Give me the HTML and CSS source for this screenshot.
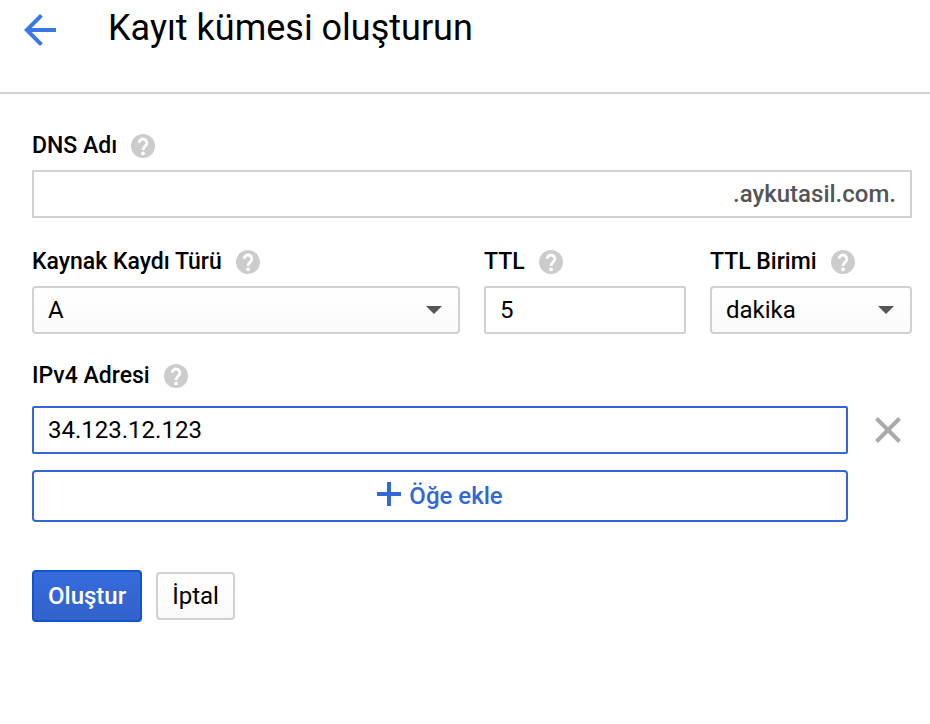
FILE: index.html
```html
<!DOCTYPE html>
<html lang="tr">
<head>
<meta charset="utf-8">
<title>Kayıt kümesi oluşturun</title>
<link rel="stylesheet" href="styles.css">
</head>
<body>
<svg class="symbols" aria-hidden="true">
  <symbol id="help" viewBox="0 0 24 24">
    <circle cx="12" cy="12" r="12" fill="#ccc"/>
    <path d="M8.200 8.800a3.800 3.800 0 1 1 6.400 2.800C13.200 12.900 12 13.600 12 16" fill="none" stroke="#fff" stroke-width="2.800"/>
    <circle cx="12" cy="19.400" r="1.900" fill="#fff"/>
  </symbol>
</svg>
<header class="header">
  <button class="icon-button" type="button" aria-label="Geri">
    <svg class="back-icon" viewBox="0 0 24 24"><path d="M20 11H7.830l5.590-5.590L12 4l-8 8 8 8 1.410-1.410L7.830 13H20v-2z" fill="#3b78e7"/></svg>
  </button>
  <h1 class="title">Kayıt kümesi oluşturun</h1>
</header>
<main>
  <form class="form">
    <div class="field">
      <div class="label-row">
        <label for="dns">DNS Adı</label>
        <svg class="help"><use href="#help"/></svg>
      </div>
      <div class="control suffixed">
        <input class="bare" id="dns" type="text">
        <span class="suffix">.aykutasil.com.</span>
      </div>
    </div>
    <div class="record-row">
      <div class="field">
        <div class="label-row">
          <label for="type">Kaynak Kaydı Türü</label>
          <svg class="help"><use href="#help"/></svg>
        </div>
        <div class="select-wrap">
          <select class="control select" id="type"><option>A</option></select>
          <svg class="caret" viewBox="0 0 16 8"><path d="M0 0h16L8 8z" fill="#555"/></svg>
        </div>
      </div>
      <div class="field">
        <div class="label-row">
          <label for="ttl">TTL</label>
          <svg class="help"><use href="#help"/></svg>
        </div>
        <input class="control rounded" id="ttl" type="text" value="5">
      </div>
      <div class="field">
        <div class="label-row">
          <label for="unit">TTL Birimi</label>
          <svg class="help"><use href="#help"/></svg>
        </div>
        <div class="select-wrap">
          <select class="control select" id="unit"><option>dakika</option></select>
          <svg class="caret" viewBox="0 0 16 8"><path d="M0 0h16L8 8z" fill="#555"/></svg>
        </div>
      </div>
    </div>
    <div class="addresses">
      <div class="label-row address-label">
        <label for="ip">IPv4 Adresi</label>
        <svg class="help"><use href="#help"/></svg>
      </div>
      <input class="control rounded active" id="ip" type="text" value="34.123.12.123">
      <button class="icon-button remove" type="button" aria-label="Kaldır">
        <svg class="close-icon" viewBox="0 0 26 26"><path d="M1.500 1.500l23 23M24.500 1.500l-23 23" stroke="#aaa" stroke-width="4"/></svg>
      </button>
      <button class="add" type="button">
        <svg class="plus-icon" viewBox="0 0 24 28"><path d="M0 12h24M12 0v24" stroke="#3367d6" stroke-width="4"/></svg>
        Öğe ekle
      </button>
    </div>
    <div class="actions">
      <button class="button primary" type="button">Oluştur</button>
      <button class="button" type="button">İptal</button>
    </div>
  </form>
</main>
</body>
</html>
```

FILE: styles.css
```css
* {
  box-sizing: border-box;
}

body {
  margin: 0;
  background: #fff;
  color: #000;
  font: 24px/28px Roboto, sans-serif;
}

svg {
  display: block;
  flex: none;
}

button,
input,
select {
  font: inherit;
  color: inherit;
}

.symbols {
  position: absolute;
  width: 0;
  height: 0;
}

.icon-button {
  display: flex;
  padding: 0;
  border: 0;
  background: none;
}

.header {
  display: flex;
  align-items: flex-start;
  gap: 44px;
  height: 94px;
  padding: 6px 16px;
  border-bottom: 2px solid #d1d1d1;
}

.back-icon {
  width: 48px;
  height: 48px;
}

.title {
  margin: 0;
  font-size: 36px;
  font-weight: 400;
  line-height: 44px;
}

.form {
  padding: 40px 18px 40px 32px;
}

.label-row {
  display: flex;
  align-items: center;
  gap: 14px;
  height: 24px;
  margin-bottom: 12px;
  font-size: 23px;
  font-weight: 500;
  line-height: 24px;
}

.help {
  width: 24px;
  height: 24px;
}

.control {
  display: block;
  width: 100%;
  height: 48px;
  padding: 0 14px;
  border: 2px solid #d1d1d1;
  border-radius: 0;
  background: #fff;
  outline: none;
}

.rounded {
  border-radius: 2px;
}

.suffixed {
  display: flex;
  align-items: center;
}

.bare {
  flex: 1;
  min-width: 0;
  border: 0;
  padding: 0;
  background: none;
  outline: none;
}

.suffix {
  color: #555;
  font-weight: 500;
}

.record-row {
  display: grid;
  grid-template-columns: 428fr 202fr 202fr;
  gap: 24px;
  margin: 32px 0 30px;
}

.select-wrap {
  position: relative;
}

.select {
  appearance: none;
  border-radius: 4px;
  background: linear-gradient(#fff, #fafafa);
}

.caret {
  position: absolute;
  top: 20px;
  right: 18px;
  width: 16px;
  height: 8px;
  pointer-events: none;
}

.addresses {
  display: grid;
  grid-template-columns: 1fr 48px;
  column-gap: 16px;
  row-gap: 16px;
}

.address-label {
  grid-column: 1 / -1;
  margin-bottom: 2px;
}

.active {
  border-color: #3367d6;
}

.remove {
  align-items: center;
  justify-content: center;
}

.close-icon {
  width: 26px;
  height: 26px;
}

.add {
  display: flex;
  align-items: center;
  justify-content: center;
  gap: 8px;
  height: 52px;
  padding: 0;
  border: 2px solid #3367d6;
  border-radius: 4px;
  background: #fff;
  color: #3367d6;
  font-weight: 500;
}

.plus-icon {
  width: 24px;
  height: 28px;
}

.actions {
  display: flex;
  align-items: center;
  gap: 14px;
  margin-top: 48px;
}

.button {
  height: 48px;
  padding: 0 14px;
  border: 2px solid #d1d1d1;
  border-radius: 4px;
  background: linear-gradient(#fff, #fafafa);
}

.primary {
  height: 52px;
  border-color: #1155cc;
  background: linear-gradient(#366bdb, #3262cc);
  color: #fff;
  font-weight: 500;
}
```
